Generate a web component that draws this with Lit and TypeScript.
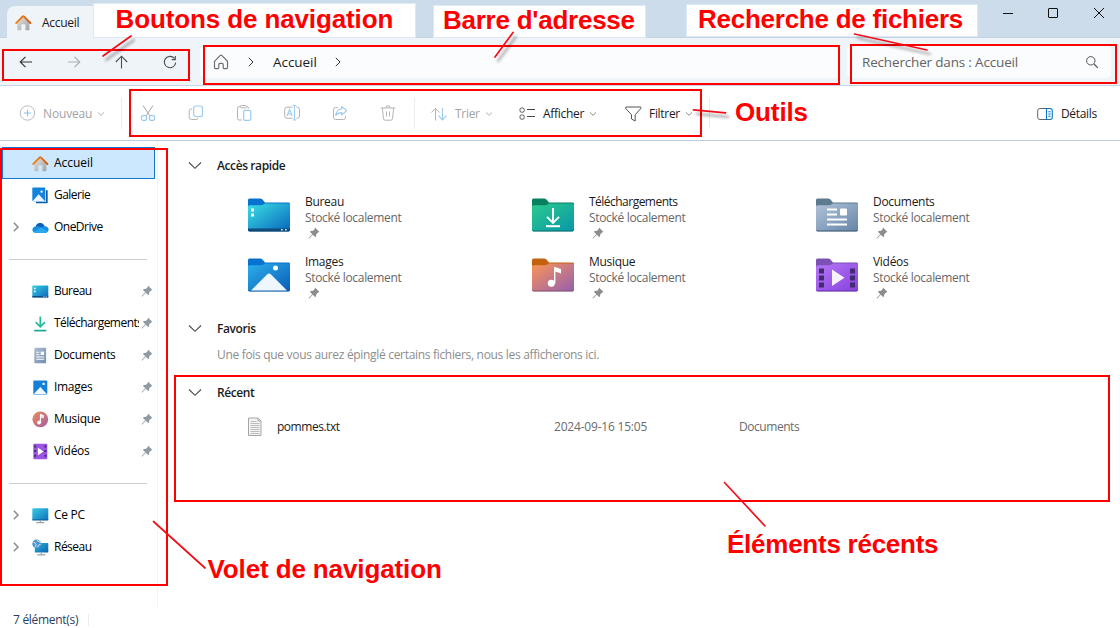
import { LitElement, html, css, svg } from "lit";
import { customElement } from "lit/decorators.js";

const ic = (w: number, h: number, body: unknown, cls = "") =>
  html`<svg class="ic ${cls}" width=${w} height=${h} viewBox="0 0 ${w} ${h}" fill="none">${body}</svg>`;

const GREY = "#b3b3b3";
const BLUE = "#9ccbee";

/* ---------- small glyphs ---------- */
const house = () => ic(17, 17, svg`
  <defs><linearGradient id="hw" x1="0" y1="0" x2="1" y2="1"><stop offset="0" stop-color="#e2e2e2"/><stop offset="1" stop-color="#a3a3a3"/></linearGradient>
  <linearGradient id="hr" x1="0" y1="0" x2="1" y2="0"><stop offset="0" stop-color="#f08a1d"/><stop offset="1" stop-color="#d35a10"/></linearGradient></defs>
  <path d="M2.2 8.2 8.3 2.6l6.1 5.6V15.4q0 .8-.8.8H10.4V11q0-.7-.7-.7H7q-.7 0-.7.7v5.2H3q-.8 0-.8-.8z" fill="url(#hw)"/>
  <path d="M1.2 9 7.800 2.400q.5-.5 1 0L15.400 9" stroke="url(#hr)" stroke-width="1.9" stroke-linecap="round" stroke-linejoin="round"/>`);

const gallery = () => ic(17, 17, svg`
  <path d="M4 15.5H14.8V3.2" stroke="#0a5ca8" stroke-width="1.7"/>
  <rect x=".3" y="0.600" width="13" height="13.600" rx="1" fill="#1283db"/>
  <path d="M.8 13.9 6.6 7.2 12.9 13.9z" fill="#eaf5ff"/><circle cx="9.6" cy="4.7" r="1.1" fill="#fff"/>`);

const cloud = () => ic(17, 17, svg`
  <path d="M4.2 14Q.4 13.6.4 10.7.6 7.8 3.6 7.4 4.8 3.9 8.2 3.9q3.2.1 4.4 3.3 3.9.3 4 3.4-.1 3-3.4 3.4z" fill="#1490df"/>
  <path d="M3.6 7.4Q4.8 3.9 8.2 3.9q3.2.1 4.4 3.3-2 .1-3.2 1.3Q6.8 6.700 3.600 7.400z" fill="#0f5fb8"/>
  <path d="M2 13 9.400 8.500 15.600 12.700Q14.800 14 13.200 14H4.200Q2.800 14 2 13z" fill="#29a8ef"/>`);

const desk = () => ic(17, 17, svg`
  <defs><linearGradient id="dk" x1="0" y1="0" x2="1" y2="1"><stop offset="0" stop-color="#35cfe6"/><stop offset="1" stop-color="#0c66b8"/></linearGradient></defs>
  <rect x=".3" y="2.600" width="16" height="11.800" rx="1" fill="url(#dk)"/>
  <rect x=".3" y="13" width="16" height="1.400" fill="#0b4a7c"/>
  <path d="M2 5.500h1.600M2 8.500h1.600" stroke="#fff" stroke-width="1.500"/><path d="M11.500 13.700h1M13.700 13.700h1" stroke="#cfe8fa"/>`);

const down = () => ic(17, 17, svg`
  <path d="M8.300 1.400V11.500M3.700 7.200 8.300 11.800 12.900 7.200" stroke="#27b99a" stroke-width="1.700"/><path d="M2.200 15.600H14.300" stroke="#19a893" stroke-width="1.700"/>`);

const docs = () => ic(17, 17, svg`
  <defs><linearGradient id="dc" x1="0" y1="0" x2="1" y2="1"><stop offset="0" stop-color="#aebfd2"/><stop offset="1" stop-color="#6f8dad"/></linearGradient></defs>
  <rect x="2.300" y=".800" width="11.800" height="15.400" rx="1" fill="url(#dc)"/>
  <path d="M4.300 5.200h3M4.300 7.800h3M4.300 10h8M4.300 12.300h8" stroke="#fff" stroke-width="1.100"/><rect x="8.700" y="4.600" width="3.400" height="3.400" fill="#fff"/>`);

const pics = () => ic(17, 17, svg`
  <rect x="1.300" y="1.500" width="14" height="14" rx="1" fill="#1680d8"/>
  <path d="M1.800 15 8.300 8 14.800 15z" fill="#f1f8ff"/><circle cx="11.600" cy="4.900" r="1.200" fill="#fff"/>`);

const tune = () => ic(17, 17, svg`
  <defs><linearGradient id="mu" x1="0" y1="0" x2="1" y2="1"><stop offset="0" stop-color="#ee8a55"/><stop offset="1" stop-color="#a35fa6"/></linearGradient></defs>
  <circle cx="8.300" cy="8.300" r="7.900" fill="url(#mu)"/>
  <circle cx="7.100" cy="11.500" r="1.900" fill="#fff"/><path d="M8.500 11.500V3.600L11.200 4.600V6.400L8.500 5.600" stroke="#fff" stroke-width="1.200"/>`);

const film = () => ic(17, 17, svg`
  <rect x="1.300" y=".800" width="14" height="15.400" rx="1" fill="#9a55e2"/>
  <path d="M3.200 2.500v12.500M13.400 2.500v12.500" stroke="#40266e" stroke-width="1.900" stroke-dasharray="2 2.600"/>
  <path d="M5.900 4.700V12.300L11.600 8.500z" fill="#fff"/>`);

const pc = () => ic(17, 17, svg`
  <defs><linearGradient id="pc" x1="0" y1="0" x2="1" y2="1"><stop offset="0" stop-color="#3ccbe2"/><stop offset="1" stop-color="#0b70bd"/></linearGradient></defs>
  <rect x=".300" y="1.300" width="16" height="12" rx=".800" fill="url(#pc)"/><rect x=".300" y="12.400" width="16" height="1" fill="#0b5c9a"/>
  <path d="M8.300 13.400v2.400M4.300 15.700h8" stroke="#97a3ad" stroke-width="1.300"/>`);

const net = () => ic(17, 17, svg`
  <defs><linearGradient id="np" x1="0" y1="0" x2="1" y2="1"><stop offset="0" stop-color="#2fb5dc"/><stop offset="1" stop-color="#0b62ae"/></linearGradient></defs>
  <rect x="2.800" y="4" width="13.500" height="9.600" rx=".700" fill="url(#np)"/>
  <path d="M9.300 13.600v2M5.300 15.800h8" stroke="#97a3ad" stroke-width="1.200"/>
  <circle cx="4.600" cy="4.900" r="4.300" fill="#4d96ca"/><path d="M1.500 3.200Q4 3.700 4 5.700T2.500 8.300M5 .700q0 2 3.200 2.400M5.500 8.200Q6 5.700 8.700 5.200" stroke="#d3e8f5" stroke-width="1"/>`);

const pin = (c: string) => ic(12, 12, svg`
  <path d="M7 .500 11.500 5 10 5.600 8.200 7.400Q8.400 9.200 7.300 10.200L4.800 7.700 1.200 11.400.600 11.500.700 10.900 4.300 7.200 1.800 4.700Q3.200 3.700 4.900 3.900L6.600 2.200z" fill=${c}/>`);

const chev = (c = GREY) => ic(8, 6, svg`<path d="M1 1.400 4 4.300 7 1.400" stroke=${c}/>`);
const right = (c: string, w = 1) => ic(8, 12, svg`<path d="M1.800 1.800 6 6 1.800 10.200" stroke=${c} stroke-width=${w}/>`);
const fold = () => ic(14, 9, svg`<path d="M1 1.500 7 7.300 13 1.500" stroke="#4a4a4a" stroke-width="1.100"/>`);

/* ---------- quick-access folders, 42 x 34 ---------- */
const folder = (id: string, tab: string, a: string, b: string, edge: string, art: unknown) => ic(42, 34, svg`
  <defs><linearGradient id=${id} x1="0" y1="0" x2="1" y2="1"><stop offset="0" stop-color=${a}/><stop offset="1" stop-color=${b}/></linearGradient></defs>
  <path d="M0 2Q0 .500 1.500.500H12Q13.500.500 14.500 1.600L17 4.600H40.500Q42 4.600 42 6V12H0z" fill=${tab}/>
  <path d="M0 8.800Q0 7.300 1.500 7.300H13Q14.500 7.300 15.500 6.500L16.800 5.400H40.600Q42 5.500 42 7V31.700Q42 33.200 40.500 33.200H1.500Q0 33.200 0 31.700z" fill="url(#${id})"/>
  <path d="M.300 32.400Q.700 33 1.500 33H40.500Q41.300 33 41.700 32.400" stroke=${edge} stroke-width="1"/>${art}`);

const tiles = [
  { name: "Bureau", icon: folder("fb", "#0872cf", "#3be0e4", "#0865bd", "#0b4674", svg`
    <path d="M0 30.500H42V31.700Q42 33.200 40.500 33.200H1.500Q0 33.200 0 31.700z" fill="#0f4a78"/>
    <path d="M3 10.400h3v3h-3zM3 15.400h3v3h-3z" fill="#fff"/><path d="M33 31h1.700v1.500H33zM37 31h1.700v1.500H37z" fill="#c9e2f4"/>`) },
  { name: "Téléchargements", tight: true, icon: folder("ft", "#08805f", "#2dca8e", "#0797a8", "#0b6a70", svg`
    <path d="M21 10V24M15 18.800 21 24.800 27 18.800" stroke="#fff" stroke-width="1.900"/><path d="M14 28.200H28" stroke="#fff" stroke-width="2"/>`) },
  { name: "Documents", icon: folder("fd", "#5d7b8c", "#b2c3d9", "#6585a8", "#3d566f", svg`
    <path d="M11 11.500H21M11 16.500H21M11 21.500H31M11 26.500H31" stroke="#fff" stroke-width="2"/><rect x="24" y="10.500" width="7" height="7" rx="1" fill="#fff"/>`) },
  { name: "Images", icon: folder("fi", "#0872cf", "#2cb0ee", "#0a5cb4", "#0a56a4", svg`
    <path d="M3 32.500 19 16.500Q21 14.500 23 16.500L39 32.500z" fill="#eef6fe"/><circle cx="27.500" cy="10" r="2.500" fill="#fff"/>`) },
  { name: "Musique", icon: folder("fm", "#c4610f", "#fc9555", "#945fb2", "#83506f", svg`
    <circle cx="19.300" cy="25.300" r="3.500" fill="#fff"/><path d="M22 25.500V8.800L29 11V15.500L23.400 13.500V25.500z" fill="#fff"/>`) },
  { name: "Vidéos", icon: folder("fv", "#7c50b4", "#b577f5", "#8741df", "#6232a4", svg`
    <path d="M3 10.500h5v5H3zM3 17.500h5v5H3zM3 24.500h5v5H3zM34 10.500h5v5H34zM34 17.500h5v5H34zM34 24.500h5v5H34z" fill="#442a70"/>
    <path d="M16 11.500V28L28.500 19.700z" fill="#f6f1fb"/>`) },
];

type Row = { label: string; icon: () => unknown; pin?: boolean; open?: boolean; on?: boolean; cls?: string } | null;
const rows: Row[] = [
  { label: "Accueil", icon: house, on: true, cls: "loose" },
  { label: "Galerie", icon: gallery, cls: "tight" },
  { label: "OneDrive", icon: cloud, open: true, cls: "tight" },
  null,
  { label: "Bureau", icon: desk, pin: true, cls: "tight" },
  { label: "Téléchargements", icon: down, pin: true, cls: "tight" },
  { label: "Documents", icon: docs, pin: true },
  { label: "Images", icon: pics, pin: true },
  { label: "Musique", icon: tune, pin: true },
  { label: "Vidéos", icon: film, pin: true },
  null,
  { label: "Ce PC", icon: pc, open: true },
  { label: "Réseau", icon: net, open: true, cls: "tight" },
];

@customElement("app-root")
export class AppRoot extends LitElement {
  static styles = css`
    :host { display: block; position: relative; width: 1120px; height: 628px; overflow: hidden; background: #fff;
      font: 12px/16px "Open Sans", "Noto Sans", sans-serif; letter-spacing: -0.3px; color: #1b1b1b; }
    * { box-sizing: border-box; }
    .ic { display: block; flex: none; overflow: visible; }
    .tight { letter-spacing: -0.52px; }
    .loose { letter-spacing: -0.02px; }
    .window { display: flex; flex-direction: column; height: 100%; }
    .title { display: flex; height: 38px; background: #ccdcea; padding: 6px 15px 0 7px; border-bottom: 1px solid #c3d3e3; flex: none; }
    .tab { display: flex; align-items: center; gap: 10px; width: 240px; height: 32px; padding: 1px 9px 0 8px; border-radius: 8px 8px 0 0; background: #eff4f9; }
    .controls { display: flex; margin-left: auto; gap: 34px; padding-top: 1px; }
    .nav { display: flex; align-items: center; height: 48px; background: #eff4f9; border-bottom: 1px solid #c6d4e3; flex: none; }
    .buttons { display: flex; gap: 32px; width: 200px; padding-left: 18px; margin-top: 1px; }
    .field { display: flex; align-items: center; height: 33px; background: #fbfcfe; border-radius: 5px; font-size: 13.500px; letter-spacing: -0.050px; }
    .address { width: 640px; padding-left: 13px; }
    .address .crumb1 { margin: 0 18px 0 18px; }
    .address .crumb2 { margin-left: 17px; }
    .search { width: 264px; margin-left: 7px; padding: 0 12px 0 15px; justify-content: space-between; color: #636363; letter-spacing: -0.170px; }
    .tools { display: flex; align-items: center; height: 55px; padding: 0 23px 0 19px; border-bottom: 1px solid #bccbdb; flex: none; }
    .cmd { display: flex; align-items: center; padding-top: 1px; }
    .cmd.off { color: #a3a3a3; }
    .lead { margin-right: 7px; }
    .new { width: 102px; letter-spacing: -0.150px; }
    .new .drop, .cmd .drop { margin-left: 5px; }
    .rule { width: 1px; height: 31px; background: #ececec; flex: none; }
    .icons { display: flex; gap: 32px; padding: 0 19px 0 18px; width: 292px; }
    .sort { width: 88px; padding-left: 15px; }
    .show { width: 106px; padding-left: 16px; }
    .filter { width: 100px; padding-left: 16px; }
    .details { margin-left: auto; gap: 8px; }
    .body { display: flex; height: 466px; flex: none; }
    .side { width: 158px; border-right: 1px solid #f3f3f3; padding: 6px 2px 0 2px; }
    .row { display: flex; align-items: center; height: 32px; padding: 0 0 0 9px; border: 1px solid transparent; width: 153px; color: #000; }
    .row.on { background: #cce8ff; border-color: #1379d0; }
    .slot { width: 20px; flex: none; }
    .row .txt { margin-left: 5px; width: 85px; overflow: hidden; white-space: nowrap; }
    .row .pinbox { margin-left: 2px; }
    .sep { display: flex; align-items: center; height: 32px; padding: 0 8px 0 7px; }
    .sep i { flex: 1; height: 1px; background: #cfcfcf; }
    .main { flex: 1; padding: 16px 0 0 30px; }
    .head { display: flex; align-items: center; height: 18px; gap: 15px; font-weight: 600; letter-spacing: -0.4px; }
    .head .ic { margin-top: -1px; }
    .grid { display: grid; grid-template-columns: repeat(3, 284px); grid-auto-rows: 60px; padding: 19px 0 0 60px; height: 145px; }
    .tile { display: flex; gap: 15px; }
    .tile .folder { padding-top: 4px; }
    .sub { color: #676767; letter-spacing: -0.32px; }
    .meta .ic { margin: 1px 0 0 3px; }
    .empty { color: #8d8d8d; padding-left: 29px; height: 46px; padding-top: 9px; letter-spacing: -0.315px; }
    .file { display: grid; grid-template-columns: 30px 277px 185px 1fr; align-items: center; height: 50px; padding-left: 59px; color: #6b6b6b; }
    .file .ic { margin-top: -1px; }
    .file b { font-weight: 400; color: #1b1b1b; letter-spacing: -0.47px; }
    .file .date { letter-spacing: -0.2px; }
    .file .place { letter-spacing: -0.45px; }
    .status { display: flex; align-items: center; height: 24px; margin-top: 1px; padding-left: 13px; color: #29405f; gap: 10px; flex: none; }
    .status i { width: 1px; height: 12px; background: #ededed; }
    .notes { position: absolute; inset: 0; }
    .box { fill: none; stroke: #f00; stroke-width: 2; }
    .link { stroke: #f21019; stroke-width: 1.700; stroke-linecap: round; }
    .plate { fill: #fff; stroke: #dde9f5; stroke-width: 1; }
    .note { fill: #f00; font: bold 26px "Liberation Sans", sans-serif; letter-spacing: -0.12px; }
    .note.snug { letter-spacing: -0.250px; }
  `;

  render() {
    return html`
      <div class="window">
        <div class="title">
          <div class="tab">${house()}<span>Accueil</span></div>
          <div class="controls">
            ${ic(12, 12, svg`<path d="M2 6.500H12" stroke="#111"/>`)}
            ${ic(12, 12, svg`<rect x="1.500" y="1.500" width="9" height="9" rx=".500" stroke="#111"/>`)}
            ${ic(12, 12, svg`<path d="M1 1 11 11M11 1 1 11" stroke="#111"/>`)}
          </div>
        </div>
        <div class="nav">
          <div class="buttons">
            ${ic(16, 16, svg`<path d="M14 8H2.500M7.500 2.800 2.200 8 7.500 13.200" stroke="#333" stroke-width="1.100"/>`)}
            ${ic(16, 16, svg`<path d="M2 8H13.500M8.500 2.800 13.800 8 8.500 13.200" stroke="#a9adb2" stroke-width="1.100"/>`)}
            ${ic(16, 16, svg`<path d="M7.500 14.500V2.500M1.800 8 7.500 2.200 13.200 8" stroke="#4a4f55" stroke-width="1.100"/>`)}
            ${ic(16, 16, svg`<path d="M12.500 4.500A5.700 5.700 0 1 0 13.700 8.600M13.300 2V5.600H9.700" stroke="#4a4f55" stroke-width="1.100"/>`)}
          </div>
          <div class="field address">
            ${ic(16, 16, svg`<path d="M1.500 7.300 7 1.600Q8 .700 9 1.600L14.500 7.300V13.600Q14.500 14.600 13.500 14.600H11.200Q10.200 14.600 10.200 13.600V10.500Q10.200 9.300 9 9.300H7Q5.800 9.300 5.800 10.500V13.600Q5.800 14.600 4.800 14.600H2.500Q1.500 14.600 1.500 13.600z" stroke="#6b6f74" stroke-width="1.200"/>`)}
            <span class="crumb1">${right("#333")}</span><span>Accueil</span><span class="crumb2">${right("#333")}</span>
          </div>
          <div class="field search"><span>Rechercher dans : Accueil</span>
            ${ic(14, 14, svg`<circle cx="5.800" cy="5.800" r="4.200" stroke="#555"/><path d="M9 9 12.800 12.800" stroke="#555" stroke-width="1.200"/>`)}</div>
        </div>
        <div class="tools">
          <div class="cmd off new">
            <span class="lead">${ic(17, 17, svg`<circle cx="8.500" cy="8" r="7.200" stroke="#b9bcc0"/><path d="M5 8H12M8.500 4.500V11.500" stroke="#8ec3ea" stroke-width="1.100"/>`)}</span>
            <span>Nouveau</span><span class="drop">${chev()}</span>
          </div>
          <div class="rule"></div>
          <div class="icons">
            ${ic(16, 18, svg`<path d="M3 1.500 10 12M13 1.500 6 12" stroke=${GREY} stroke-width="1.100"/><circle cx="4" cy="14" r="2.700" stroke=${BLUE} stroke-width="1.200"/><circle cx="12" cy="14" r="2.700" stroke=${BLUE} stroke-width="1.200"/>`)}
            ${ic(16, 18, svg`<path d="M4 5H3.200Q1.200 5 1.200 7V13Q1.200 15.500 3.700 15.500H8Q9.800 15.500 9.800 13.700" stroke=${GREY}/><rect x="5.700" y="2" width="8.800" height="10.500" rx="2" stroke=${BLUE} stroke-width="1.200"/>`)}
            ${ic(16, 18, svg`<path d="M5 2.700H3Q1.500 2.700 1.500 4.200V14.500Q1.500 16 3 16H6M11 2.700Q12.500 2.700 12.500 4.200V4.700" stroke=${GREY}/><rect x="4.500" y="1.500" width="6" height="2.300" rx="1" stroke=${GREY}/><rect x="7.700" y="6.300" width="7" height="10" rx="1.200" stroke=${BLUE} stroke-width="1.200"/>`)}
            ${ic(16, 18, svg`<path d="M8.500 3.200H3Q.700 3.200.700 5.500V12Q.700 14.300 3 14.300H8.500M12.500 3.200H13.200Q15.500 3.200 15.500 5.500V12Q15.500 14.300 13.200 14.300H12.500" stroke=${GREY}/><path d="M3 12 5.600 5.500 8.200 12M3.800 10H7.400M10.500 1.500V16M8.700 1.500H12.300M8.700 16H12.300" stroke=${BLUE} stroke-width="1.100"/>`)}
            ${ic(16, 18, svg`<path d="M5.500 3.500H3.500Q1.500 3.500 1.500 5.500V13.500Q1.500 15.500 3.500 15.500H11.500Q13.500 15.500 13.500 13.500V12" stroke=${GREY}/><path d="M9.700 2.300 14.700 6.700 9.700 11V8.600Q6 8.500 3.800 11.500 4.300 5.500 9.700 4.800z" stroke=${BLUE} stroke-width="1.100" stroke-linejoin="round"/>`)}
            ${ic(16, 18, svg`<path d="M.700 3.900H15.300M2.300 4 3.500 14.700Q3.700 16.200 5.200 16.200H10.800Q12.300 16.200 12.500 14.700L13.700 4M5.800 3.800Q5.800 1.700 8 1.700T10.200 3.800M6.500 7.500V12.500M9.500 7.500V12.500" stroke=${GREY}/>`)}
          </div>
          <div class="rule"></div>
          <div class="cmd off sort">
            <span class="lead">${ic(18, 16, svg`<path d="M5.500 14.500V2.500M1.300 6.500 5.500 2.300 9.700 6.500" stroke=${GREY}/><path d="M12.500 2V13.700M8.500 9.700 12.500 13.900 16.500 9.700" stroke=${BLUE} stroke-width="1.100"/>`)}</span>
            <span>Trier</span><span class="drop">${chev()}</span>
          </div>
          <div class="cmd show">
            <span class="lead">${ic(17, 16, svg`<rect x="1" y="2" width="4.200" height="4.200" rx="1.500" stroke="#555"/><rect x="1" y="9" width="4.200" height="4.200" rx="1.500" stroke="#555"/><path d="M8 3.500H16M8 10.500H16" stroke="#444"/>`)}</span>
            <span>Afficher</span><span class="drop">${chev("#8a8a8a")}</span>
          </div>
          <div class="cmd filter">
            <span class="lead">${ic(17, 16, svg`<path d="M.800 1H15.800V2.600L10.200 8.700V15L6.500 13V8.700L.800 2.600z" stroke="#555" stroke-linejoin="round"/>`)}</span>
            <span>Filtrer</span><span class="drop">${chev("#8a8a8a")}</span>
          </div>
          <div class="rule"></div>
          <div class="cmd details">
            ${ic(16, 14, svg`<path d="M9.500 1.500H3Q.700 1.500.700 3.700V10.300Q.700 12.500 3 12.500H9.500" stroke="#666"/><path d="M9.500 1.500H13Q15.300 1.500 15.300 3.700V10.300Q15.300 12.500 13 12.500H9.500zM11.300 4.700H13.700M11.300 7H13.700M11.300 9.300H13.700" stroke="#0b76ca" stroke-width="1.100"/>`)}
            <span>Détails</span>
          </div>
        </div>
        <div class="body">
          <div class="side">
            ${rows.map((r) => r === null ? html`<div class="sep"><i></i></div>` : html`
              <div class="row ${r.on ? "on" : ""}">
                <span class="slot">${r.open ? right("#8b8b8b", 1.5) : ""}</span>${r.icon()}
                <span class="txt ${r.cls ?? ""}">${r.label}</span>
                ${r.pin ? html`<span class="pinbox">${pin("#8f9aa3")}</span>` : ""}
              </div>`)}
          </div>
          <div class="main">
            <div class="head">${fold()}<span>Accès rapide</span></div>
            <div class="grid">
              ${tiles.map((t) => html`<div class="tile"><div class="folder">${t.icon}</div>
                <div class="meta"><div class=${t.tight ? "tight" : ""}>${t.name}</div><div class="sub">Stocké localement</div>${pin("#8c8c8c")}</div></div>`)}
            </div>
            <div class="head">${fold()}<span>Favoris</span></div>
            <div class="empty">Une fois que vous aurez épinglé certains fichiers, nous les afficherons ici.</div>
            <div class="head">${fold()}<span>Récent</span></div>
            <div class="file">
              ${ic(16, 20, svg`<path d="M1.500 1H11L14 4V18.500H1.500z" fill="#f4f4f4" stroke="#a5a5a5"/><path d="M11 1V4H14" stroke="#a5a5a5"/><path d="M3.500 4.500H9.500M3.500 6.500H12.500M3.500 8.500H12.500M3.500 10.500H12.500M3.500 12.500H12.500M3.500 14.500H12.500M3.500 16.500H12.500" stroke="#b9bdc0"/>`)}
              <b>pommes.txt</b><span class="date">2024-09-16 15:05</span><span class="place">Documents</span>
            </div>
          </div>
        </div>
        <div class="status"><span>7 élément(s)</span><i></i></div>
      </div>
      <svg class="notes" width="1120" height="628">
        <defs><filter id="sh" filterUnits="userSpaceOnUse" x="0" y="0" width="1120" height="628"><feDropShadow dx="3" dy="4" stdDeviation="1.500" flood-color="#000" flood-opacity=".45"/></filter></defs>
        <rect class="plate" x="93.500" y="3.500" width="322" height="34"/>
        <rect class="plate" x="433.500" y="5.500" width="212" height="32"/>
        <rect class="plate" x="686.500" y="4.500" width="291" height="32"/>
        <rect class="box" x="3" y="50" width="186" height="30"/>
        <rect class="box" x="204" y="46" width="635" height="38"/>
        <rect class="box" x="851" y="45" width="265" height="38"/>
        <rect class="box" x="130" y="90" width="571" height="46"/>
        <rect class="box" x="1" y="149" width="166" height="436"/>
        <rect class="box" x="175" y="376" width="934" height="125"/>
        <g filter="url(#sh)">
          <path class="link" d="M131 36 103 56"/><path class="link" d="M513 32.500 495 57"/>
          <path class="link" d="M854.500 34 927 50"/><path class="link" d="M693.500 109.800 725.500 112.800"/>
        </g>
        <path class="link" d="M724.500 482.500 765 526"/><path class="link" d="M153.500 521.500 205 568"/>
        <text class="note" x="115.500" y="28">Boutons de navigation</text>
        <text class="note snug" x="443" y="29">Barre d'adresse</text>
        <text class="note snug" x="698" y="28">Recherche de fichiers</text>
        <text class="note" x="735" y="121">Outils</text>
        <text class="note snug" x="727" y="553">Éléments récents</text>
        <text class="note" x="207.500" y="578">Volet de navigation</text>
      </svg>
    `;
  }
}
